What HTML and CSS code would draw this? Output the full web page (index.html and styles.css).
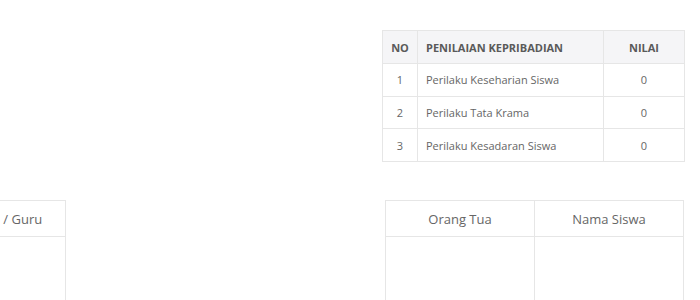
FILE: index.html
```html
<!DOCTYPE html>
<html lang="id">
  <head>
    <meta charset="utf-8" />
    <title>Rapor Kepribadian</title>
    <link rel="stylesheet" href="styles.css">
  </head>
  <body>
    <!-- Nilai kepribadian -->
    <div class="score-row">
      <table class="score">
        <thead>
          <tr>
            <th class="col-no">NO</th>
            <th class="col-name">PENILAIAN KEPRIBADIAN</th>
            <th class="col-val">NILAI</th>
          </tr>
        </thead>
        <tbody>
          <tr>
            <td class="col-no">1</td>
            <td class="col-name">Perilaku Keseharian Siswa</td>
            <td class="col-val">0</td>
          </tr>
          <tr>
            <td class="col-no">2</td>
            <td class="col-name">Perilaku Tata Krama</td>
            <td class="col-val">0</td>
          </tr>
          <tr>
            <td class="col-no">3</td>
            <td class="col-name">Perilaku Kesadaran Siswa</td>
            <td class="col-val">0</td>
          </tr>
        </tbody>
      </table>
    </div>

    <!-- Tanda tangan -->
    <div class="sign-row">
      <table class="sign">
        <tr><th>Wali Kelas / Guru</th></tr>
        <tr><td></td></tr>
      </table>
      <table class="sign sign-pair">
        <tr><th>Orang Tua</th><th>Nama Siswa</th></tr>
        <tr><td></td><td></td></tr>
      </table>
    </div>
  </body>
</html>
```

FILE: styles.css
```css
body {
  margin: 0;
  font-family: "Open Sans", sans-serif;
  color: #666;
  background: #fff;
  overflow: hidden;
}

table {
  border-collapse: collapse;
}

/* Score table, top right */
.score-row {
  display: flex;
  justify-content: flex-end;
  padding: 30px 15px 0 0;
}
.score {
  width: 303px;
  font-size: 11px;
}
.score th,
.score td {
  border: 1px solid #e6e6e6;
  height: 32.7px;
  padding: 0 8px;
  box-sizing: border-box;
}
.score th {
  background: #f5f5f7;
  color: #5a5a5a;
  font-weight: 700;
  height: 33px;
}
.score td {
  color: #666;
}
.score .col-no {
  width: 35px;
  text-align: center;
  padding: 0;
}
.score .col-name {
  text-align: left;
}
.score .col-val {
  width: 81px;
  text-align: center;
}

/* Signature tables */
.sign-row {
  display: flex;
  justify-content: space-between;
  margin: 38px 16px 0 -85px;
}
.sign th,
.sign td {
  border: 1px solid #e6e6e6;
  width: 150px;
  box-sizing: border-box;
}
.sign-pair th,
.sign-pair td {
  width: 149px;
}
.sign th {
  height: 36px;
  font-size: 13px;
  font-weight: 400;
  color: #666;
}
.sign td {
  height: 90px;
}
```
